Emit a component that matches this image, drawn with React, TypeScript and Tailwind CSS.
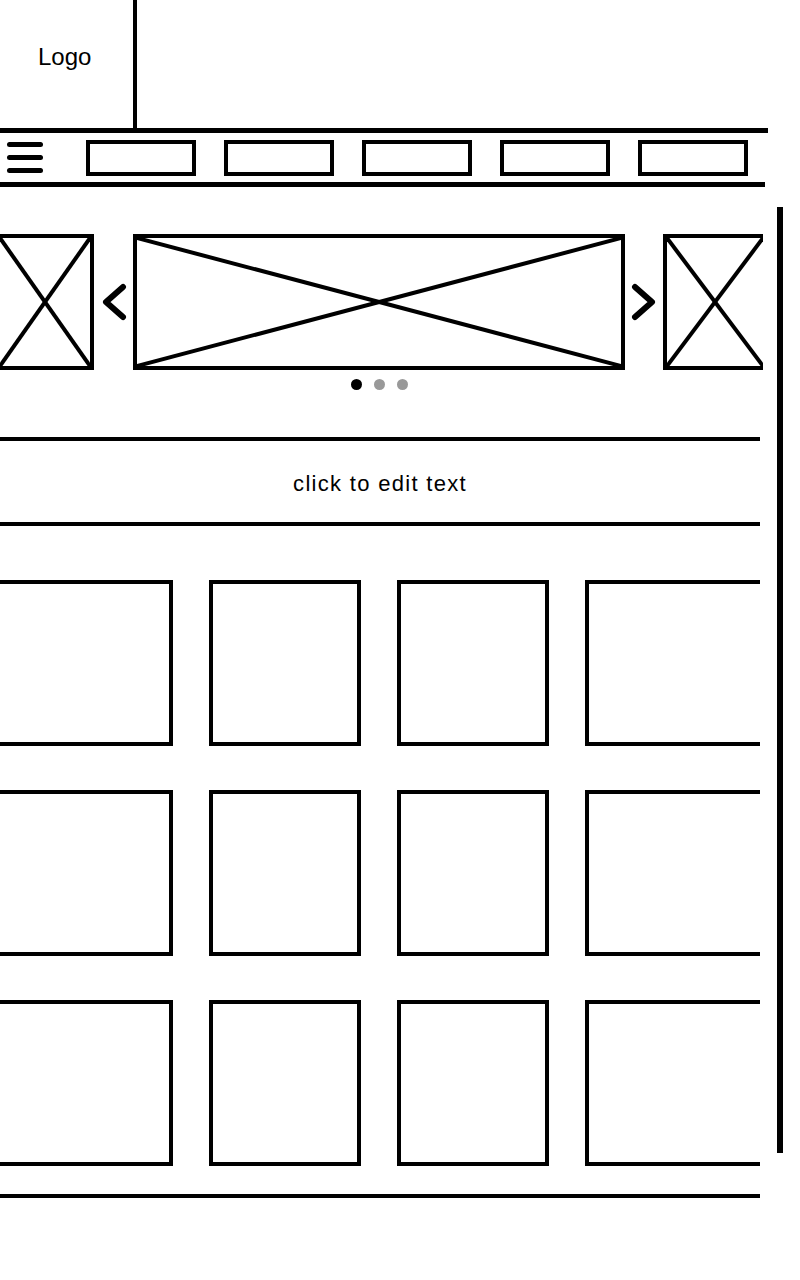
import React from "react";

const font = { fontFamily: '"Liberation Sans", Arial, sans-serif' };

function XLines() {
  return (
    <svg
      className="absolute inset-0 h-full w-full"
      viewBox="0 0 100 100"
      preserveAspectRatio="none"
    >
      <line x1="0" y1="0" x2="100" y2="100" stroke="black" strokeWidth="4" vectorEffect="non-scaling-stroke" />
      <line x1="100" y1="0" x2="0" y2="100" stroke="black" strokeWidth="4" vectorEffect="non-scaling-stroke" />
    </svg>
  );
}

function Chevron({ dir }: { dir: "left" | "right" }) {
  const pts = dir === "left" ? "22,5 5,20 22,35" : "4,5 21,20 4,35";
  return (
    <svg width="26" height="40" viewBox="0 0 26 40">
      <polyline points={pts} fill="none" stroke="black" strokeWidth="6" strokeLinecap="round" strokeLinejoin="round" />
    </svg>
  );
}

function GridRow() {
  return (
    <div className="flex gap-[36px]">
      <div className="h-[166px] w-[173px] border-4 border-l-0 border-black" />
      <div className="h-[166px] w-[152px] border-4 border-black" />
      <div className="h-[166px] w-[152px] border-4 border-black" />
      <div className="h-[166px] w-[175px] border-4 border-r-0 border-black" />
    </div>
  );
}

export default function App() {
  return (
    <div className="h-[1280px] w-[800px] overflow-hidden bg-white text-black" style={font}>
      {/* Header */}
      <div className="flex h-[128px]">
        <div className="h-full w-[137px] border-r-4 border-black pl-[38px] pt-[45px] text-[24px] leading-none">
          Logo
        </div>
      </div>
      <div className="h-[5px] w-[768px] bg-black" />
      {/* Nav */}
      <div className="flex h-[49px] items-center">
        <div className="flex w-[86px] flex-col gap-[8px] pl-[7px]">
          <div className="h-[5px] w-[36px] rounded-full bg-black" />
          <div className="h-[5px] w-[36px] rounded-full bg-black" />
          <div className="h-[5px] w-[36px] rounded-full bg-black" />
        </div>
        <div className="flex gap-[28px]">
          <div className="h-[36px] w-[110px] border-4 border-black" />
          <div className="h-[36px] w-[110px] border-4 border-black" />
          <div className="h-[36px] w-[110px] border-4 border-black" />
          <div className="h-[36px] w-[110px] border-4 border-black" />
          <div className="h-[36px] w-[110px] border-4 border-black" />
        </div>
      </div>
      <div className="h-[5px] w-[765px] bg-black" />

      {/* Main */}
      <div className="flex">
        <div className="w-[777px]">
          {/* Carousel */}
          <div className="mt-[47px] flex h-[136px]">
            <div className="relative h-full w-[94px] border-4 border-l-0 border-black">
              <XLines />
            </div>
            <div className="flex w-[39px] items-center justify-center">
              <Chevron dir="left" />
            </div>
            <div className="relative h-full w-[492px] border-4 border-black">
              <XLines />
            </div>
            <div className="flex w-[38px] items-center justify-center">
              <Chevron dir="right" />
            </div>
            <div className="relative h-full w-[100px] border-4 border-r-0 border-black">
              <XLines />
            </div>
          </div>
          {/* Dots */}
          <div className="mt-[9px] flex w-[758px] justify-center gap-[12px]">
            <div className="h-[11px] w-[11px] rounded-full bg-black" />
            <div className="h-[11px] w-[11px] rounded-full bg-[#999999]" />
            <div className="h-[11px] w-[11px] rounded-full bg-[#999999]" />
          </div>

          {/* Text section */}
          <div className="mt-[47px] h-[4px] w-[760px] bg-black" />
          <div className="flex h-[81px] w-[760px] items-center justify-center pt-[4px] text-[22px] leading-none tracking-[1.3px]">
            click to edit text
          </div>
          <div className="h-[4px] w-[760px] bg-black" />

          {/* Grid */}
          <div className="mt-[54px] flex flex-col gap-[44px]">
            <GridRow />
            <GridRow />
            <GridRow />
          </div>

          <div className="mt-[28px] h-[4px] w-[760px] bg-black" />
        </div>
        <div className="mt-[20px] h-[946px] w-[6px] bg-black" />
      </div>
    </div>
  );
}
